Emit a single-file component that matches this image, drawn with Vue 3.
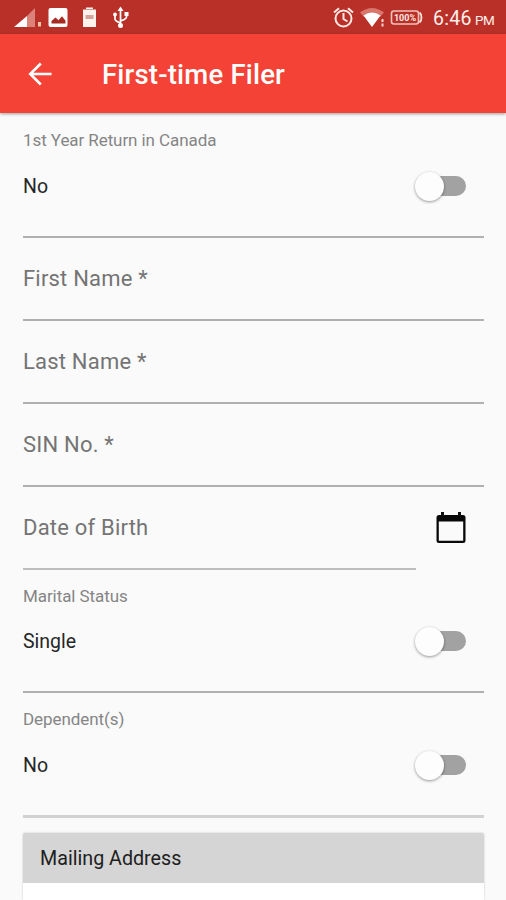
<script setup>
const fields = [
  { kind: 'switch', label: '1st Year Return in Canada', value: 'No', cls: 'first' },
  { kind: 'text', label: 'First Name *', cls: 'name' },
  { kind: 'text', label: 'Last Name *', cls: 'last' },
  { kind: 'text', label: 'SIN No. *', cls: 'sin' },
  { kind: 'date', label: 'Date of Birth', cls: 'dob' },
  { kind: 'switch', label: 'Marital Status', value: 'Single', cls: 'marital' },
  { kind: 'switch', label: 'Dependent(s)', value: 'No', cls: 'dependents' },
]
</script>

<template>
  <div class="screen">
    <div class="status">
      <svg class="status-icons" width="140" height="34" viewBox="0 0 140 34">
        <path d="M14 27 27 16V27Z" fill="#fff" />
        <path d="M27 16 35 8V27H27Z" fill="#dc8379" />
        <rect x="38" y="22" width="3" height="4.500" fill="#efc4a8" />
        <rect x="48.500" y="8" width="19" height="19" rx="2" fill="#fff" />
        <path d="M51.500 23.500V21l4-3.500 3 2.700 3.500-4 3.500 4.500v2.800Z" fill="#a72a23" />
        <path d="M83 9.500h3V7.500h7v2h3V27H83Z" fill="#fff3eb" />
        <path d="M86 9.500h7" stroke="#d99b90" />
        <path d="M85.500 15h8v4h-8Z" fill="#d5a39a" />
        <g fill="none" stroke="#fff" stroke-width="1.700">
          <path d="M120.500 10V25M115 15v4q0 2 5.500 4M126.500 14v3q0 2-6 4" />
        </g>
        <path d="M117.500 11 120.500 6.500 123.500 11Z" fill="#fff" />
        <circle cx="120.500" cy="25.500" r="2.500" fill="#fff" />
        <circle cx="115" cy="14.500" r="1.900" fill="#fff" />
        <rect x="124.500" y="12" width="4" height="4" fill="#fff" />
      </svg>
      <div class="status-right">
        <svg width="107" height="34" viewBox="326 0 107 34">
          <g fill="none" stroke="#ffe9e2" stroke-width="2">
            <circle cx="343.500" cy="18.500" r="8" />
            <path d="M343.500 13v6l4 2.500M334 12.500l5-4.300M353 12.500l-5-4.300" />
          </g>
          <path d="M360 12.500q12-9 24 0l-4 4.500q-8-5-16 0Z" fill="#d9756b" />
          <path d="M363.500 15.500q8.500-6 17 0L372 27Z" fill="#fff" />
          <path d="M382.500 19v3M382.500 23.500v3" stroke="#ffd8cd" stroke-width="2" />
          <rect x="391.500" y="11" width="27" height="13" rx="2.500" fill="none" stroke="#f0c2ba" stroke-width="1.600" />
          <path d="M419.500 12.500q2 1.500 2 5t-2 5" fill="none" stroke="#ffe4dc" stroke-width="1.800" />
          <text x="405" y="21" text-anchor="middle" class="battery">100%</text>
        </svg>
        <span class="time">6:46</span><span class="pm">PM</span>
      </div>
    </div>
    <header class="bar">
      <svg class="back" width="24" height="24" viewBox="0 0 24 24" fill="none" stroke="#fff" stroke-width="2.600">
        <path d="M23.500 12H2M12.800 1.500 2.200 12l10.600 10.500" />
      </svg>
      <h1>First-time Filer</h1>
    </header>
    <main>
      <div v-for="f in fields" :key="f.label" class="field" :class="[f.kind, f.cls]">
        <template v-if="f.kind === 'switch'">
          <div class="caption"><span>{{ f.label }}</span></div>
          <div class="setting">
            <span class="value">{{ f.value }}</span>
            <span class="toggle"><span class="knob"></span></span>
          </div>
        </template>
        <template v-else>
          <div class="input"><span>{{ f.label }}</span></div>
          <svg v-if="f.kind === 'date'" class="calendar" width="30" height="32" viewBox="0 0 30 32">
            <path d="M3 3H27Q29.500 3 29.500 5.500V28.500Q29.500 31 27 31H3Q.5 31 .5 28.500V5.500Q.5 3 3 3ZM2.800 9.500V28.700H27.200V9.500Z" fill="#080808" fill-rule="evenodd" />
            <path d="M6.500 0V4M23.500 0V4" stroke="#111" stroke-width="3" />
          </svg>
        </template>
      </div>
      <section class="card">
        <div class="card-head"><span>Mailing Address</span></div>
      </section>
    </main>
  </div>
</template>

<style>
body { margin: 0; overflow: hidden; }
</style>

<style scoped>
.screen {
  width: 506px;
  height: 900px;
  overflow: hidden;
  background: #fafafa;
  font-family: Roboto, "Liberation Sans", sans-serif;
  color: #202020;
}
.status {
  height: 34px;
  background: #b93029;
  display: flex;
  justify-content: space-between;
}
.status svg { display: block; flex: none; }
.status-right { width: 180px; display: flex; align-items: baseline; color: #ffefeb; }
.battery { font: 700 9px Roboto, sans-serif; fill: #ffe9e2; }
.status-right svg { align-self: flex-start; }
.time { font-size: 19.5px; line-height: 37px; letter-spacing: 0.3px; width: 42px; }
.pm { font-size: 13.5px; letter-spacing: -0.4px; }
.bar {
  height: 79px;
  box-sizing: border-box;
  padding-left: 28px;
  display: flex;
  align-items: center;
  background: #f44336;
  box-shadow: 0 1px 3px rgba(0, 0, 0, 0.38);
  position: relative;
}
.back { margin-right: 50px; }
h1 { margin: 3px 0 0; color: #fff; font-size: 27.5px; letter-spacing: 0.2px; line-height: 32px; font-weight: 500; }
main { padding: 0 22px 0 23px; }
.field { box-sizing: border-box; border-bottom: 2px solid #b0b0b0; }
.switch { height: 124px; }
.switch.first { height: 125px; }
.switch.marital { height: 123px; }
.text, .date { height: 83px; }
.caption {
  height: 54px;
  display: flex;
  align-items: center;
  font-size: 17px;
  letter-spacing: -0.08px;
  color: #858585;
}
.marital .caption { height: 51px; }
.dependents .caption { height: 52px; }
.setting {
  height: 38px;
  display: flex;
  align-items: center;
  justify-content: space-between;
  padding-right: 18px;
}
.marital .setting, .dependents .setting { margin-top: 1px; }
.value { font-size: 19.5px; color: #262626; }
.toggle {
  width: 44px;
  height: 20px;
  border-radius: 10px;
  background: #a2a2a2;
  display: flex;
  align-items: center;
}
.knob {
  width: 29px;
  height: 29px;
  flex: none;
  margin-left: -7px;
  border-radius: 50%;
  background: #fdfdfd;
  box-shadow: 0 1px 3px rgba(0, 0, 0, 0.4);
}
.input { height: 81px; display: flex; align-items: center; font-size: 22px; letter-spacing: 0.2px; color: #747474; }
.date { display: flex; justify-content: space-between; border-bottom: 0; padding-right: 18px; }
.date .input { width: 393px; border-bottom: 2px solid #bdbdbd; }
.calendar { margin-top: 25px; }
.switch.dependents { border-bottom: 3px solid #d2d2d2; height: 125px; }
.card { margin-top: 15px; height: 67px; background: #fff; border-radius: 2px 2px 0 0; box-shadow: 0 0 2px rgba(0, 0, 0, 0.25); }
.card-head {
  height: 50px;
  background: #d5d5d5;
  border-radius: 2px 2px 0 0;
  display: flex;
  align-items: center;
  padding-left: 17px;
  font-size: 19.7px;
}
</style>
